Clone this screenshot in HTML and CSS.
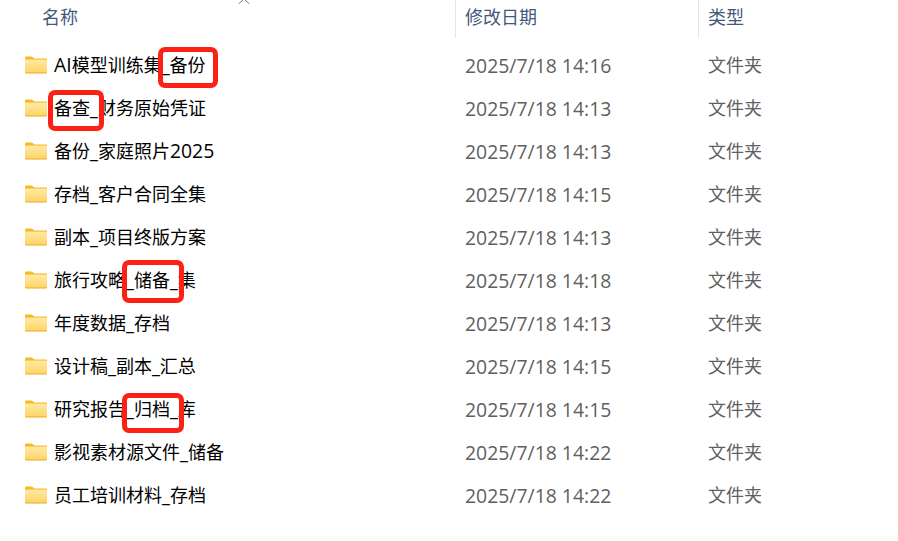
FILE: index.html
```html
<!DOCTYPE html>
<html lang="zh-CN">
<head>
<meta charset="utf-8">
<title>文件列表</title>
<link rel="stylesheet" href="styles.css">
</head>
<body>
<svg class="sprite" width="0" height="0" aria-hidden="true">
  <defs>
    <linearGradient id="fg" x1="0" y1="0" x2="0" y2="1">
      <stop offset="0" stop-color="#ffeaa6"/>
      <stop offset="1" stop-color="#fdd567"/>
    </linearGradient>
    <symbol id="folder" viewBox="0 0 22 18">
      <path d="M0 2.2C0 1.2.7.5 1.6.5h4.600c.6 0 1 .2 1.400.6L9.200 2.600H22V5H0z" fill="#fbb81f"/>
      <rect x="0" y="3.4" width="22" height="14.1" rx="1" fill="#eeaa22"/>
      <rect x="0" y="3.4" width="22" height="13.2" rx=".8" fill="url(#fg)"/>
    </symbol>
  </defs>
</svg>
<main class="explorer">
  <svg class="chevron" width="14" height="5" viewBox="0 0 14 5" aria-hidden="true"><path d="M1.500 5 7 0l5.500 5" fill="none" stroke="#7a7a7a" stroke-width="1"/></svg>
  <header class="head">
    <div class="hname">名称</div>
    <div class="hdate">修改日期</div>
    <div class="htype">类型</div>
  </header>
  <ul class="rows">
    <li class="row"><div class="name"><svg class="ico"><use href="#folder"/></svg><span><span class="lat">AI</span>模型训练集_备份</span></div><div class="date">2025/7/18 14:16</div><div class="type">文件夹</div></li>
    <li class="row"><div class="name"><svg class="ico"><use href="#folder"/></svg><span>备查_财务原始凭证</span></div><div class="date">2025/7/18 14:13</div><div class="type">文件夹</div></li>
    <li class="row"><div class="name"><svg class="ico"><use href="#folder"/></svg><span>备份_家庭照片<span class="lat">2025</span></span></div><div class="date">2025/7/18 14:13</div><div class="type">文件夹</div></li>
    <li class="row"><div class="name"><svg class="ico"><use href="#folder"/></svg><span>存档_客户合同全集</span></div><div class="date">2025/7/18 14:15</div><div class="type">文件夹</div></li>
    <li class="row"><div class="name"><svg class="ico"><use href="#folder"/></svg><span>副本_项目终版方案</span></div><div class="date">2025/7/18 14:13</div><div class="type">文件夹</div></li>
    <li class="row"><div class="name"><svg class="ico"><use href="#folder"/></svg><span>旅行攻略_储备_集</span></div><div class="date">2025/7/18 14:18</div><div class="type">文件夹</div></li>
    <li class="row"><div class="name"><svg class="ico"><use href="#folder"/></svg><span>年度数据_存档</span></div><div class="date">2025/7/18 14:13</div><div class="type">文件夹</div></li>
    <li class="row"><div class="name"><svg class="ico"><use href="#folder"/></svg><span>设计稿_副本_汇总</span></div><div class="date">2025/7/18 14:15</div><div class="type">文件夹</div></li>
    <li class="row"><div class="name"><svg class="ico"><use href="#folder"/></svg><span>研究报告_归档_库</span></div><div class="date">2025/7/18 14:15</div><div class="type">文件夹</div></li>
    <li class="row"><div class="name"><svg class="ico"><use href="#folder"/></svg><span>影视素材源文件_储备</span></div><div class="date">2025/7/18 14:22</div><div class="type">文件夹</div></li>
    <li class="row"><div class="name"><svg class="ico"><use href="#folder"/></svg><span>员工培训材料_存档</span></div><div class="date">2025/7/18 14:22</div><div class="type">文件夹</div></li>
  </ul>
  <div class="mark m1"></div>
  <div class="mark m2"></div>
  <div class="mark m3"></div>
  <div class="mark m4"></div>
</main>
</body>
</html>
```
FILE: styles.css
```css
* { box-sizing: border-box; }
html, body { margin: 0; padding: 0; background: #fff; }
body { width: 898px; height: 541px; overflow: hidden; font-family: "Open Sans", "Noto Sans CJK SC", sans-serif; font-size: 18px; }
.sprite { position: absolute; }
.explorer { position: relative; width: 898px; height: 541px; }
.chevron { position: absolute; left: 237px; top: -1px; }
.head { display: grid; grid-template-columns: 455px 243px 1fr; height: 37px; color: #44597a; }
.hname { padding: 0 0 3px 42px; line-height: 35px; }
.hdate, .htype { padding: 0 0 3px 9px; line-height: 35px; border-left: 1px solid #e5e5e5; }
.rows { list-style: none; margin: 0; padding: 7px 0 0; }
.row { display: grid; grid-template-columns: 455px 243px 1fr; grid-template-rows: 43px; height: 43px; align-items: center; line-height: 43px; color: #5f5f5f; }
.name { display: flex; align-items: center; height: 43px; padding-left: 25px; color: #000; }
.lat { font-size: 19.4px; line-height: 0; }
.ico { width: 22px; height: 18px; margin: -1px 7px 0 0; flex: none; }
.date { padding-left: 10px; font-size: 19.4px; line-height: 43px; }
.type { padding-left: 10px; }
.mark { position: absolute; border: 5px solid #fb2215; border-radius: 7px; }
.m1 { left: 158px; top: 47px; width: 60px; height: 41px; }
.m2 { left: 48px; top: 90px; width: 56px; height: 41px; }
.m3 { left: 122px; top: 260px; width: 62px; height: 43px; }
.m4 { left: 122px; top: 393px; width: 62px; height: 40px; }
```
